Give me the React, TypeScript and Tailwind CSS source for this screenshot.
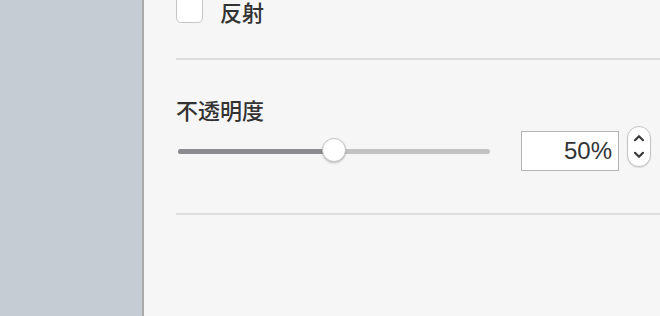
import React from "react";

const cjk = { fontFamily: '"Noto Sans CJK JP", "Noto Sans CJK SC", sans-serif' };

function Stepper() {
  return (
    <div className="w-[24px] h-[41px] rounded-full border border-[#c4c4c4] bg-white shadow-[0_1px_1px_rgba(0,0,0,0.12)] flex flex-col items-center justify-center gap-[9px]">
      <svg width="12" height="8" viewBox="0 0 12 8" fill="none" stroke="#3a3a3a" strokeWidth="2.2" strokeLinecap="round" strokeLinejoin="round">
        <path d="M2 6.2L6 2.2l4 4" />
      </svg>
      <svg width="12" height="8" viewBox="0 0 12 8" fill="none" stroke="#3a3a3a" strokeWidth="2.2" strokeLinecap="round" strokeLinejoin="round">
        <path d="M2 1.8L6 5.8l4-4" />
      </svg>
    </div>
  );
}

export default function App() {
  const value = 50;
  return (
    <div className="flex w-[660px] h-[316px] overflow-hidden bg-[#f6f6f6]">
      <div className="w-[144px] shrink-0 bg-[#c5ccd4] border-r-2 border-[#ababab]" />
      <div className="flex-1 pl-[32px] overflow-hidden">
        {/* reflection */}
        <div className="flex items-start gap-[17px] h-[23px]">
          <div className="w-[27px] h-[27px] -mt-[4px] shrink-0 rounded-[5px] border border-[#c6c6c6] bg-white" />
          <span className="text-[22px] leading-[22px] font-medium text-[#333]" style={cjk}>
            反射
          </span>
        </div>
        <div className="mt-[35px] h-[2px] bg-[#dcdcdc]" />

        {/* opacity */}
        <div className="mt-[35px] text-[22px] leading-[28px] font-medium text-[#333]" style={cjk}>
          不透明度
        </div>
        <div className="flex items-center h-[50px] mt-[3px] pl-[2px]">
          <div className="relative w-[312px] h-[26px] flex items-center">
            <div className="w-full h-[5px] rounded-full bg-[#c2c2c2] overflow-hidden">
              <div className="h-full bg-[#8c8c90]" style={{ width: `${value}%` }} />
            </div>
            <div
              className="absolute top-0 w-[24px] h-[24px] -ml-[12px] rounded-full bg-white border border-[#c4c4c4] shadow-[0_1px_2px_rgba(0,0,0,0.25)]"
              style={{ left: `${value}%` }}
            />
          </div>
          <div
            className="ml-[31px] w-[98px] h-[40px] border border-[#b4b4b4] bg-white flex items-center justify-end pr-[6px] text-[24px] text-[#333]"
            style={{ fontFamily: '"Liberation Sans", Arial, sans-serif' }}
          >
            {value}%
          </div>
          <div className="ml-[8px] -mt-[9px]">
            <Stepper />
          </div>
        </div>
        <div className="mt-[37px] h-[2px] bg-[#dcdcdc]" />
      </div>
    </div>
  );
}
